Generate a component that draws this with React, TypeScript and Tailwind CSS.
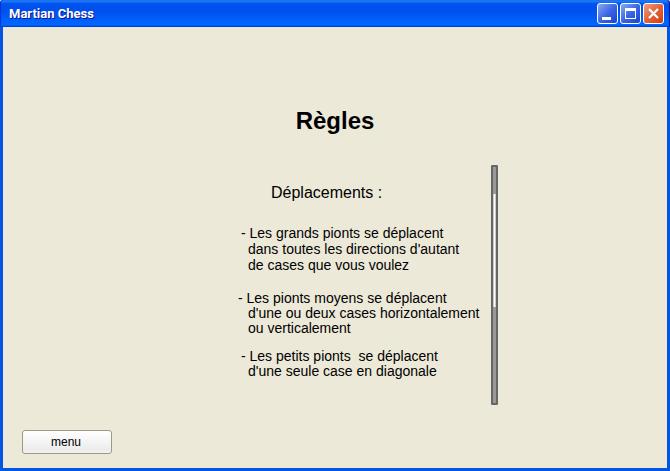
import React from "react";

const captionButton =
  "flex h-[21px] w-[21px] items-center justify-center rounded-[3px] border border-white";

function TitleBar() {
  return (
    <header className="flex h-[27px] items-center justify-between rounded-t-[3px] bg-[linear-gradient(180deg,#2a8fff,#0053ee_14%,#0050ee_40%,#0066ff_88%,#0066ff_93%,#005bff_95%,#0047e0_98%,#0047e0)] pr-[6px] pl-[9px] shadow-[inset_1px_0_1px_#0831d9,inset_-1px_0_1px_#00138c]">
      <h1 className="font-['Roboto'] text-[13px] leading-4 font-bold text-white [text-shadow:1px_1px_#0f1089]">
        Martian Chess
      </h1>
      <div className="flex gap-[2px]">
        <button
          type="button"
          aria-label="Réduire"
          className={`${captionButton} bg-[linear-gradient(135deg,#8ba9f5,#3c66e4_50%,#1845d0)]`}
        >
          <svg width="19" height="19" viewBox="0 0 19 19" shapeRendering="crispEdges">
            <rect x="4" y="13" width="9" height="3" fill="#fff" />
          </svg>
        </button>
        <button
          type="button"
          aria-label="Agrandir"
          className={`${captionButton} bg-[linear-gradient(135deg,#8ba9f5,#3c66e4_50%,#1845d0)]`}
        >
          <svg width="19" height="19" viewBox="0 0 19 19" shapeRendering="crispEdges">
            <path d="M4 4h11v11H4zM5 7v7h9V7z" fill="#fff" fillRule="evenodd" />
          </svg>
        </button>
        <button
          type="button"
          aria-label="Fermer"
          className={`${captionButton} bg-[linear-gradient(135deg,#f0a080,#e2623c_50%,#d63c08)]`}
        >
          <svg width="19" height="19" viewBox="0 0 19 19">
            <path d="M5 5l9 9M14 5l-9 9" stroke="#fff" strokeWidth="2.2" />
          </svg>
        </button>
      </div>
    </header>
  );
}

function ScrollTrack() {
  return (
    <div className="flex w-[7px] shrink-0 flex-col rounded-[1px] border-2 border-[#666864] bg-[#999]">
      <div className="mt-[27px] h-[113px] border-x border-[#ccc] bg-white" />
    </div>
  );
}

export default function App() {
  return (
    <div className="flex min-h-screen flex-col bg-white font-['Liberation_Sans',Arial,sans-serif] text-black">
      <TitleBar />
      <main className="flex grow flex-col border-x-[3px] border-b-[3px] border-[#0055e5] bg-[#ece9d8]">
        <h2 className="mt-[78px] text-center text-2xl leading-8 font-bold">Règles</h2>
        <section className="mx-auto mt-7 flex h-60 w-[326px]">
          <div className="grow pl-[76px] text-sm">
            <h3 className="mt-4 pl-[23px] text-base leading-6">Déplacements :</h3>
            <p className="mt-5 -indent-[7px] leading-4 whitespace-pre">
              - Les grands pionts se déplacent
              <span className="block indent-0">dans toutes les directions d'autant</span>
              <span className="block indent-0">de cases que vous voulez</span>
            </p>
            <p className="mt-[18px] -indent-[10px] leading-[15px] whitespace-pre">
              - Les pionts moyens se déplacent
              <span className="block indent-0">d'une ou deux cases horizontalement</span>
              <span className="block indent-0">ou verticalement</span>
            </p>
            <p className="mt-[13px] -indent-[7px] leading-[15px] whitespace-pre">
              {"- Les petits pionts  se déplacent"}
              <span className="block indent-0">d'une seule case en diagonale</span>
            </p>
          </div>
          <ScrollTrack />
        </section>
        <button
          type="button"
          className="mt-auto mb-[14px] ml-[19px] h-6 w-[90px] self-start rounded-[3px] border border-[#a09886] bg-[linear-gradient(180deg,#ffffff,#ececec_86%,#f4f4f4)] pr-[2px] text-xs leading-4"
        >
          menu
        </button>
      </main>
    </div>
  );
}
